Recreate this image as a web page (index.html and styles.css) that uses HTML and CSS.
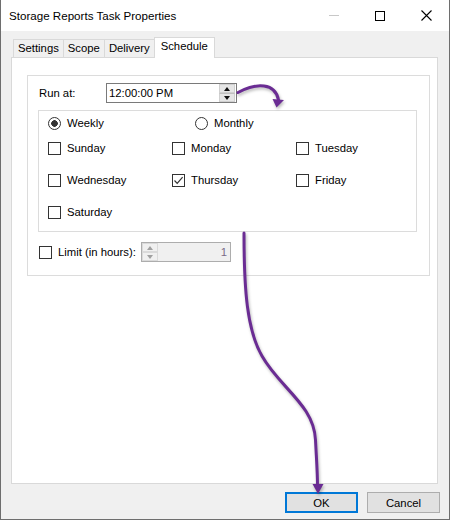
FILE: index.html
```html
<!DOCTYPE html>
<html>
<head>
<meta charset="utf-8">
<link rel="stylesheet" href="styles.css">
</head>
<body>
<div class="window">
  <div class="titlebar">
    <div class="title">Storage Reports Task Properties</div>
    <div class="controls">
      <span class="ctl"><svg width="10" height="1"><rect width="10" height="1" fill="#c8c8c8"/></svg></span>
      <span class="ctl"><svg width="10" height="10"><rect x="0.5" y="0.5" width="9" height="9" fill="none" stroke="#000"/></svg></span>
      <span class="ctl"><svg width="11" height="11"><path d="M0.5,0.5L10.5,10.5M10.5,0.5L0.5,10.5" stroke="#000" stroke-width="1.1"/></svg></span>
    </div>
  </div>
  <div class="client">
    <div class="tabs">
      <div class="tab">Settings</div>
      <div class="tab">Scope</div>
      <div class="tab">Delivery</div>
      <div class="tab active">Schedule</div>
    </div>
    <div class="panel">
      <div class="group">
        <div class="run-row">
          <span class="run-label">Run at:</span>
          <div class="spin-input time">
            <span class="value">12:00:00 PM</span>
            <div class="spinner">
              <span class="spin-btn"><span class="tri-up"></span></span>
              <span class="spin-btn"><span class="tri-down"></span></span>
            </div>
          </div>
        </div>
        <div class="days">
          <div class="radio-row">
            <div class="opt weekly"><span class="radio checked"></span>Weekly</div>
            <div class="opt"><span class="radio"></span>Monthly</div>
          </div>
          <div class="day-grid">
            <div class="opt"><span class="check"></span>Sunday</div>
            <div class="opt"><span class="check"></span>Monday</div>
            <div class="opt"><span class="check"></span>Tuesday</div>
            <div class="opt"><span class="check"></span>Wednesday</div>
            <div class="opt"><span class="check"><svg width="11" height="11" viewBox="0 0 11 11"><path d="M1.5,5.5L4.2,8.3L9.6,2.2" fill="none" stroke="#333" stroke-width="1.2"/></svg></span>Thursday</div>
            <div class="opt"><span class="check"></span>Friday</div>
            <div class="opt"><span class="check"></span>Saturday</div>
          </div>
        </div>
        <div class="limit-row">
          <div class="opt limit-label"><span class="check"></span>Limit (in hours):</div>
          <div class="spin-input num">
            <div class="spinner disabled">
              <span class="spin-btn"><span class="tri-up"></span></span>
              <span class="spin-btn"><span class="tri-down"></span></span>
            </div>
            <span class="value right">1</span>
          </div>
        </div>
      </div>
    </div>
    <div class="buttons">
      <button class="btn default">OK</button>
      <button class="btn">Cancel</button>
    </div>
  </div>
  <svg class="arrows" width="450" height="520" viewBox="0 0 450 520">
    <g class="arrow">
      <path d="M238,92.5 C248,87 257,85 264,86 C272,87 277,92 278.5,100" fill="none" stroke="#6a2c93" stroke-width="3" stroke-linecap="round"/>
      <polygon points="272.5,99 284,100 276.5,107.5" fill="#6a2c93"/>
      <path d="M244,233 C244,290 247,330 262,356 C280,388 314,405 315.5,440 C316.5,460 317.5,472 317.5,486" fill="none" stroke="#6a2c93" stroke-width="3" stroke-linecap="round"/>
      <polygon points="312.5,484 323.5,484 318,494" fill="#6a2c93"/>
    </g>
  </svg>
</div>
</body>
</html>
```

FILE: styles.css
```css
body {
  margin: 0;
  font-family: "Liberation Sans", Arial, sans-serif;
  font-size: 11.3px;
  color: #000;
}

.window {
  position: relative;
  width: 450px;
  height: 520px;
  box-sizing: border-box;
  border: 1px solid #6e6e6e;
  border-top: 0;
  background: #f0f0f0;
  display: flex;
  flex-direction: column;
}

.titlebar {
  flex: none;
  height: 31px;
  background: #fff;
  display: flex;
  align-items: center;
}

.title {
  flex: 1;
  padding-left: 8px;
  font-size: 11.6px;
}

.controls {
  display: flex;
  height: 100%;
}

.ctl {
  width: 46px;
  display: flex;
  align-items: center;
  justify-content: center;
}

.client {
  flex: 1;
  display: flex;
  flex-direction: column;
  padding: 6px 11px 6px 10px;
}

.tabs {
  flex: none;
  display: flex;
  align-items: flex-end;
  height: 21px;
  margin-bottom: -1px;
  padding-left: 2px;
}

.tab {
  height: 19px;
  box-sizing: border-box;
  border: 1px solid #d9d9d9;
  border-bottom: 0;
  margin-left: -1px;
  padding: 0 4px;
  line-height: 17px;
  background: #f0f0f0;
}

.tab:first-child {
  margin-left: 0;
}

.tab.active {
  position: relative;
  z-index: 1;
  height: 21px;
  padding: 0 6px;
  background: #fff;
}

.panel {
  flex: 1;
  box-sizing: border-box;
  border: 1px solid #d9d9d9;
  background: #fff;
  padding: 17px 0 0 15px;
}

.group {
  width: 403px;
  height: 201px;
  box-sizing: border-box;
  border: 1px solid #dcdcdc;
  padding: 7px 0 0 10px;
}

.run-row {
  display: flex;
  align-items: center;
  padding-left: 1px;
}

.run-label {
  width: 67px;
}

.spin-input {
  height: 20px;
  box-sizing: border-box;
  border: 1px solid #7a7a7a;
  background: #fff;
  display: flex;
  align-items: center;
}

.spin-input.time {
  width: 131px;
}

.spin-input.num {
  width: 90px;
  border-color: #adadad;
  background: #f0f0f0;
}

.value {
  flex: 1;
  padding-left: 2px;
}

.value.right {
  text-align: right;
  padding: 0 3px 0 0;
  color: #7a6a88;
}

.spinner {
  width: 16px;
  height: 18px;
  margin-right: 1px;
  display: flex;
  flex-direction: column;
}

.spinner.disabled {
  margin-right: 0;
}

.spin-btn {
  flex: 1;
  display: flex;
  align-items: center;
  justify-content: center;
  background: #e6e6e6;
  border: 1px solid #d0d0d0;
}

.spin-btn + .spin-btn {
  border-top-color: #c0c0c0;
}

.spinner.disabled .spin-btn {
  background: #f0f0f0;
  border-color: #dadada;
}

.tri-up {
  width: 0;
  height: 0;
  border-left: 3.5px solid transparent;
  border-right: 3.5px solid transparent;
  border-bottom: 4px solid #111;
}

.tri-down {
  width: 0;
  height: 0;
  border-left: 3.5px solid transparent;
  border-right: 3.5px solid transparent;
  border-top: 4px solid #111;
}

.spinner.disabled .tri-up {
  border-bottom-color: #a0a0a0;
}

.spinner.disabled .tri-down {
  border-top-color: #a0a0a0;
}

.days {
  width: 379px;
  height: 122px;
  box-sizing: border-box;
  margin-top: 7px;
  border: 1px solid #dcdcdc;
  padding: 6px 0 0 9px;
}

.radio-row {
  display: flex;
  height: 13px;
  align-items: center;
}

.opt {
  display: flex;
  align-items: center;
  gap: 6px;
  height: 13px;
  line-height: 13px;
  white-space: nowrap;
}

.opt.weekly {
  width: 147px;
}

.radio {
  width: 13px;
  height: 13px;
  box-sizing: border-box;
  border: 1px solid #333;
  border-radius: 50%;
  background: #fff;
  flex: none;
}

.radio.checked {
  background: radial-gradient(circle, #333 0 3px, #fff 3.6px);
}

.check {
  width: 13px;
  height: 13px;
  box-sizing: border-box;
  border: 1px solid #333;
  background: #fff;
  flex: none;
  display: flex;
}

.day-grid {
  margin-top: 12px;
  display: grid;
  grid-template-columns: 124px 124px 1fr;
  grid-auto-rows: 13px;
  row-gap: 19px;
}

.limit-row {
  margin-top: 10px;
  display: flex;
  align-items: center;
  padding-left: 1px;
}

.limit-label {
  width: 102px;
}

.buttons {
  flex: none;
  display: flex;
  justify-content: flex-end;
  gap: 9px;
  margin-top: 8px;
  margin-right: -2px;
}

.btn {
  width: 73px;
  height: 21px;
  box-sizing: border-box;
  border: 1px solid #adadad;
  background: #e1e1e1;
  font: inherit;
  color: #000;
  padding: 0;
}

.btn.default {
  border: 2px solid #0078d7;
}

.arrows {
  position: absolute;
  top: 0;
  left: -1px;
  pointer-events: none;
  overflow: visible;
}

.arrow {
  filter: drop-shadow(1.5px 2px 1.5px rgba(0, 0, 0, 0.28));
}
```
